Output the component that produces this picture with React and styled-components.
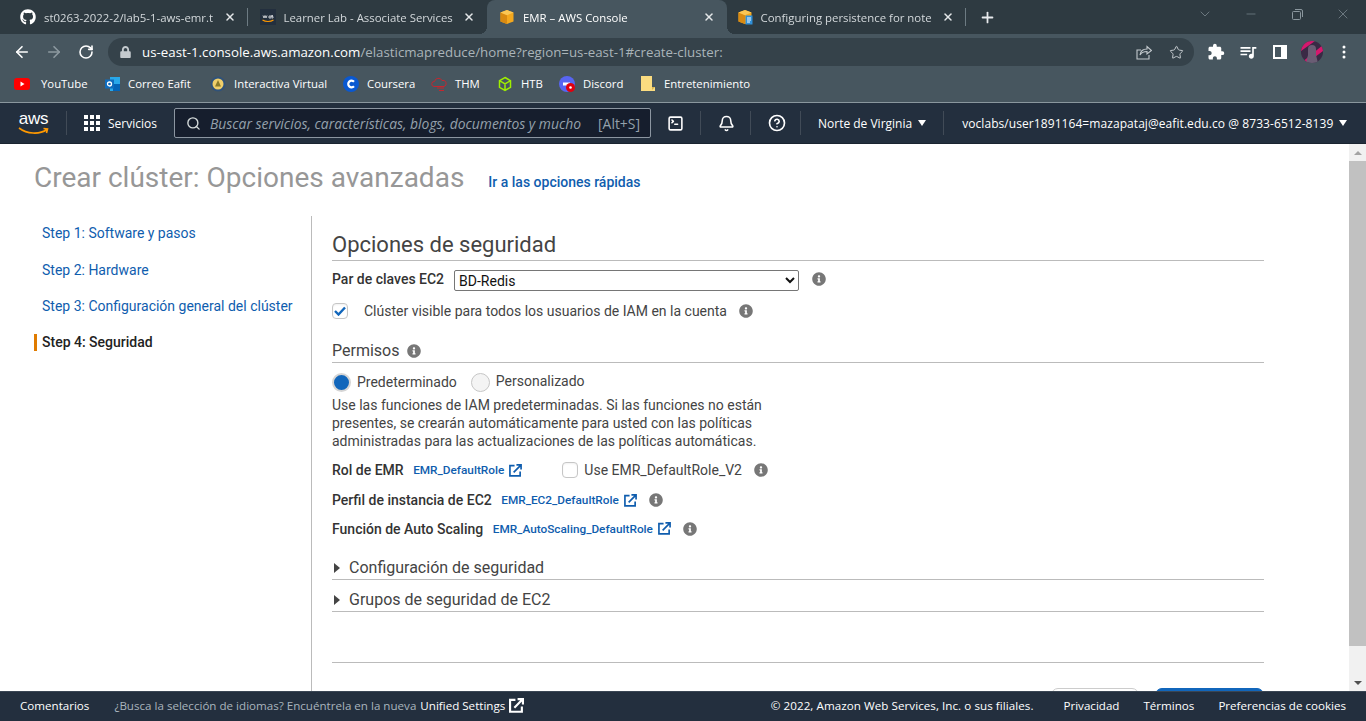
import React from "react";
import styled, { createGlobalStyle } from "styled-components";
import { FaGithub, FaInfoCircle, FaLock } from "react-icons/fa";
import { MdExtension, MdQueueMusic } from "react-icons/md";
import { ArrowLeft, ArrowRight, RotateCw, Star, Bell, CircleHelp, SquareTerminal, Search, X, Plus, ChevronDown, Minus } from "lucide-react";

const GlobalStyle = createGlobalStyle`
  html, body { margin: 0; padding: 0; height: 100%; overflow: hidden; background: #fff; }
  * { box-sizing: border-box; }
`;

const Page = styled.div`
  width: 1366px;
  height: 721px;
  display: flex;
  flex-direction: column;
  overflow: hidden;
  font-family: Roboto, sans-serif;
`;

/* browser chrome */
const TabStrip = styled.div`
  height: 34px;
  flex: none;
  display: flex;
  align-items: center;
  padding-left: 8px;
  background: #2e3a41;
  font-family: "Open Sans", sans-serif;
  font-size: 11.4px;
`;
const Tab = styled.div`
  position: relative;
  width: 239.5px;
  height: 34px;
  flex: none;
  display: flex;
  align-items: center;
  gap: 8px;
  padding: 0 10px 0 ${(p) => p.$left ?? 12}px;
  border-radius: 8px 8px 0 0;
  color: ${(p) => (p.$active ? "#fff" : "#d3d8db")};
  background: ${(p) => (p.$active ? "#47565f" : "transparent")};
  &::after {
    content: "";
    display: ${(p) => (p.$sep ? "block" : "none")};
    position: absolute;
    right: 0;
    top: 8px;
    width: 1px;
    height: 18px;
    background: #6d7b83;
  }
`;
const Flare = styled.span`
  position: absolute;
  bottom: 0;
  width: 8px;
  height: 8px;
  ${(p) =>
    p.$right
      ? "right: -8px; background: radial-gradient(circle at 100% 0, transparent 8px, #47565f 8px);"
      : "left: -8px; background: radial-gradient(circle at 0 0, transparent 8px, #47565f 8px);"}
`;
const TabTitle = styled.span`
  flex: 1;
  min-width: 0;
  white-space: nowrap;
  overflow: hidden;
  -webkit-mask-image: linear-gradient(to right, #000 calc(100% - 6px), transparent);
  mask-image: linear-gradient(to right, #000 calc(100% - 6px), transparent);
`;
const TabClose = styled(X)`
  flex: none;
  width: 12px;
  height: 12px;
  margin: 0 2px 0 -4px;
  color: #e4e7e9;
`;
const NewTab = styled(Plus)`
  width: 17px;
  height: 17px;
  margin-left: 13px;
  color: #e8eaed;
`;
const WindowControls = styled.div`
  margin-left: auto;
  align-self: flex-start;
  display: flex;
  height: 28px;
  align-items: center;
  color: #8b979e;
`;
const WindowButton = styled.div`
  width: 46px;
  display: flex;
  justify-content: center;
`;
const Toolbar = styled.div`
  height: 37px;
  flex: none;
  display: flex;
  align-items: center;
  background: #47565f;
  padding: 0 0 1px 6px;
`;
const ToolButton = styled.div`
  width: ${(p) => p.$w || 32}px;
  height: 28px;
  flex: none;
  display: flex;
  align-items: center;
  justify-content: center;
  color: ${(p) => p.$color || "#fff"};
`;
const Omnibox = styled.div`
  width: 1086px;
  height: 28px;
  margin: 0 6px 0 6px;
  flex: none;
  display: flex;
  align-items: center;
  padding: 0 2px 0 12px;
  border-radius: 14px;
  background: #35424a;
  font-family: "Open Sans", sans-serif;
  font-size: 13.3px;
  color: #aab4b9;
  white-space: nowrap;
`;
const Lock = styled(FaLock)`
  width: 11px;
  height: 12px;
  margin-right: 11px;
  color: #c4cace;
`;
const Host = styled.span`
  color: #fff;
`;
const Grow = styled.div`
  flex: 1;
`;
const Avatar = styled.svg`
  width: 22px;
  height: 22px;
  border-radius: 50%;
`;
const Bookmarks = styled.div`
  height: 32px;
  flex: none;
  display: flex;
  align-items: center;
  padding: 0 0 6px 14px;
  background: #47565f;
  border-bottom: 1px solid #8a979e;
  font-family: "Open Sans", sans-serif;
  font-size: 11.35px;
  color: #fff;
`;
const Bookmark = styled.div`
  width: ${(p) => p.$w}px;
  flex: none;
  display: flex;
  align-items: center;
  gap: ${(p) => p.$gap || 8}px;
  white-space: nowrap;
`;

/* aws console nav */
const Nav = styled.div`
  height: 41px;
  flex: none;
  display: flex;
  align-items: center;
  padding-left: 18px;
  background: #232f3e;
  border-bottom: 1px solid #1a2430;
  color: #fff;
  font-family: "Open Sans", sans-serif;
  font-size: 12px;
  white-space: nowrap;
`;
const Logo = styled.div`
  position: relative;
  width: 31px;
  height: 26px;
  flex: none;
  font-family: "Liberation Sans", sans-serif;
  font-size: 17px;
  line-height: 18px;
  text-align: center;
  letter-spacing: -0.3px;
`;
const Smile = styled.svg`
  position: absolute;
  left: 0;
  bottom: 0;
`;
const NavDivider = styled.div`
  width: 1px;
  height: 24px;
  flex: none;
  margin: 0 ${(p) => p.$after ?? 17}px 0 ${(p) => p.$before ?? 17}px;
  background: #414b57;
`;
const NavLabel = styled.span`
  margin-left: ${(p) => p.$left || 0}px;
  letter-spacing: ${(p) => p.$track || 0}px;
`;
const SearchBox = styled.div`
  width: 477px;
  height: 30px;
  flex: none;
  display: flex;
  align-items: center;
  margin: 0 16px 0 17px;
  padding: 0 10px 0 11px;
  background: #161e2d;
  border: 1px solid #8c96a1;
  border-radius: 2px;
  color: #95a1ac;
  font-size: 13.9px;
`;
const Placeholder = styled.span`
  flex: 1;
  margin-left: 9px;
  font-style: italic;
  white-space: nowrap;
`;
const Caret = styled.span`
  width: 0;
  height: 0;
  margin-left: ${(p) => p.$left ?? 6}px;
  border-left: 4.5px solid transparent;
  border-right: 4.5px solid transparent;
  border-top: 6px solid #fff;
`;

/* page body */
const Body = styled.div`
  flex: 1;
  min-height: 0;
  display: flex;
  overflow: hidden;
`;
const Scroll = styled.div`
  flex: 1;
  min-width: 0;
`;
const ScrollBar = styled.div`
  width: 17px;
  flex: none;
  display: flex;
  flex-direction: column;
  background: #f1f1f1;
`;
const ScrollArrow = styled.div`
  height: 17px;
  display: flex;
  align-items: center;
  justify-content: center;
  &::before {
    content: "";
    border-left: 4px solid transparent;
    border-right: 4px solid transparent;
    ${(p) => (p.$up ? "border-bottom: 4px solid #a3a3a3;" : "border-top: 4px solid #505050;")}
  }
`;
const Thumb = styled.div`
  height: 485px;
  background: #c1c1c1;
`;
const TitleRow = styled.div`
  height: 72px;
  display: flex;
  align-items: center;
  padding: 0 0 6px 34px;
`;
const Title = styled.h1`
  margin: 0;
  font-size: 28px;
  font-weight: 400;
  color: #979797;
`;
const QuickLink = styled.a`
  margin: 9px 0 0 24px;
  font-size: 14px;
  font-weight: 500;
  color: #0f5dae;
`;
const Columns = styled.div`
  display: flex;
`;
const Side = styled.nav`
  width: 312px;
  height: 480px;
  flex: none;
  padding-left: 34px;
  border-right: 1px solid #bbb;
`;
const Step = styled.div`
  height: 34px;
  margin-bottom: 2.6px;
  display: flex;
  align-items: center;
  padding-left: 8px;
  font-size: 14px;
  color: #0f5dae;
`;
const ActiveStep = styled.div`
  height: 17px;
  margin-top: 10.8px;
  display: flex;
  align-items: center;
  padding-left: 5px;
  border-left: 3px solid #e07b00;
  font-size: 14px;
  font-weight: 500;
  color: #222;
`;
const Panel = styled.div`
  width: 932px;
  margin-left: 20px;
  padding-top: 16px;
  color: #444;
  font-size: 14px;
`;
const H2 = styled.h2`
  margin: 0;
  height: 29px;
  font-size: 22px;
  line-height: 26px;
  font-weight: 400;
  border-bottom: 1px solid #bbb;
`;
const Row = styled.div`
  display: flex;
  align-items: center;
  height: ${(p) => p.$h}px;
  margin-top: ${(p) => p.$top || 0}px;
`;
const Label = styled.span`
  font-weight: 500;
  color: #333;
  margin-right: ${(p) => p.$gap ?? 9.5}px;
`;
const Select = styled.select`
  width: 345px;
  height: 21px;
  margin-top: 3px;
  padding: 0;
  font-family: Roboto, sans-serif;
  font-size: 14px;
  color: #111;
  background: #fff;
  border: 1px solid #767676;
  border-radius: 2px;
`;
const Info = styled(FaInfoCircle)`
  flex: none;
  width: 14px;
  height: 14px;
  margin-left: ${(p) => p.$left ?? 12}px;
  color: #777;
`;
const Box = styled.span`
  width: 16px;
  height: 16px;
  flex: none;
  display: flex;
  align-items: center;
  justify-content: center;
  margin: ${(p) => p.$margin || 0};
  background: #fff;
  border: 1px solid #c6c6c6;
  border-radius: 4px;
  box-shadow: inset 0 1px 2px rgba(0, 0, 0, 0.06);
`;
const Sub = styled.div`
  height: 25px;
  margin-top: 13px;
  padding-top: 2px;
  font-size: 16px;
  line-height: 22px;
  display: flex;
  align-items: center;
  border-bottom: 1px solid #bbb;
`;
const Radio = styled.span`
  width: 19px;
  height: 19px;
  flex: none;
  margin-right: ${(p) => p.$gap}px;
  border-radius: 50%;
  background: ${(p) => (p.$on ? "#1166bb" : "#f4f4f4")};
  border: ${(p) => (p.$on ? "2px solid #d5d5d5" : "1px solid #c6c6c6")};
`;
const Option = styled.span`
  margin-right: ${(p) => p.$gap || 0}px;
  position: relative;
  top: ${(p) => p.$up || 0}px;
`;
const Help = styled.p`
  width: 450px;
  margin: -5px 0 0;
  line-height: 18px;
  color: #444;
`;
const RoleLink = styled.a`
  display: inline-flex;
  align-items: center;
  gap: 5px;
  font-size: 11.8px;
  font-weight: 500;
  color: #0f5dae;
`;
const Section = styled.div`
  height: 32px;
  margin-top: ${(p) => p.$top || 0}px;
  display: flex;
  align-items: center;
  padding: 8px 0 0 2px;
  font-size: 16px;
  color: #444;
  border-bottom: 1px solid #bbb;
`;
const Arrow = styled.span`
  width: 0;
  height: 0;
  margin-right: 9px;
  border-top: 5px solid transparent;
  border-bottom: 5px solid transparent;
  border-left: 6px solid #444;
`;
const Rule = styled.div`
  height: 1px;
  margin-top: 50px;
  background: #bbb;
`;
const Actions = styled.div`
  display: flex;
  justify-content: flex-end;
  gap: 16px;
  margin-top: 25px;
`;
const Action = styled.div`
  width: ${(p) => p.$w}px;
  height: 30px;
  border-radius: 7px;
  background: ${(p) => (p.$primary ? "#1166bb" : "#fff")};
  border: 1px solid ${(p) => (p.$primary ? "#1166bb" : "#ccc")};
`;

/* console footer */
const Footer = styled.footer`
  height: 30px;
  flex: none;
  display: flex;
  align-items: center;
  padding: 0 20px 2px;
  background: #232f3e;
  border-top: 1px solid #3a4654;
  font-family: "Open Sans", sans-serif;
  font-size: 11.6px;
  color: #fff;
  white-space: nowrap;
`;
const Muted = styled.span`
  margin-left: 25px;
  color: #a9b4bd;
`;
const FootLink = styled.span`
  display: flex;
  margin-left: ${(p) => p.$left}px;
`;
const Copyright = styled.span`
  letter-spacing: 0.06px;
`;

const ExternalIcon = ({ size = 13, weight = 1.8 }) => (
  <svg width={size} height={size} viewBox="0 0 14 14" fill="none" stroke="currentColor" strokeWidth={weight}>
    <path d="M6 1.800H1v11h11V8" />
    <path d="M5 9l7.500-7.500M8 1h5v5" />
  </svg>
);

const Cube = ({ note }) => (
  <svg width="16" height="16" viewBox="0 0 16 16">
    <path d="M8 1l6.500 2.600v8.800L8 15 1.500 12.400V3.600z" fill="#f4a81e" />
    <path d="M8 6.200L1.500 3.600V12.400L8 15z" fill="#d98a12" />
    <path d="M8 1l6.500 2.600L8 6.200 1.500 3.600z" fill="#fbc654" />
    {note && <path d="M8.500 6.500h7v9h-7z" fill="#2f8fd8" />}
    {note && <path d="M10 9h4M10 11h4M10 13h3" stroke="#fff" strokeWidth="1" />}
  </svg>
);

const AwsFavicon = () => (
  <svg width="16" height="16" viewBox="0 0 16 16">
    <rect width="16" height="16" fill="#232f3e" />
    <path d="M3 6.500l1 2.500 1-2.500 1 2.500 1-2.500M9 7h2v2H9zM13 6.500h-1.500v1h1.500v1.500h-1.500" stroke="#e8eaed" strokeWidth=".8" fill="none" />
    <path d="M2.500 11c3 2 8 2 11 0" stroke="#f90" strokeWidth="1.100" fill="none" />
  </svg>
);

const SidePanelIcon = () => (
  <svg width="14" height="14" viewBox="0 0 14 14">
    <path d="M0 0h14v14H0z" fill="#fff" />
    <path d="M2 2h6v10H2z" fill="#47565f" />
  </svg>
);

const Dots = () => (
  <svg width="4" height="14" viewBox="0 0 4 14" fill="#fff">
    <circle cx="2" cy="2" r="1.500" />
    <circle cx="2" cy="7" r="1.500" />
    <circle cx="2" cy="12" r="1.500" />
  </svg>
);

const ShareIcon = () => (
  <svg width="16" height="16" viewBox="0 0 16 16" fill="none" stroke="#c4cace" strokeWidth="1.100">
    <path d="M5 6H1v9h12v-4" />
    <path d="M4 11c.5-4 3.500-6 7-6V2.500L15.500 6.500 11 10V7.500c-3 0-5.500 1-7 3.500z" />
  </svg>
);

const Grid = () => (
  <svg width="16" height="16" viewBox="0 0 16 16" fill="#fff">
    {[0, 6, 12].flatMap((y) =>
      [0, 6, 12].map((x) => <rect key={`${x}-${y}`} x={x} y={y} width="4" height="4" />)
    )}
  </svg>
);

const bookmarks = [
  { name: "YouTube", w: 91, gap: 11, icon: <svg width="16" height="12" viewBox="0 0 16 12"><rect width="16" height="12" rx="3" fill="#f00" /><path d="M6.500 3.500v5l4-2.500z" fill="#fff" /></svg> },
  { name: "Correo Eafit", w: 105, icon: <svg width="15" height="16" viewBox="0 0 15 16"><path d="M5 1h10v14H5z" fill="#28a8ea" /><path d="M8 8h7v7H8z" fill="#0364b8" /><rect y="3.500" width="9" height="9" fill="#0f6cbd" /><circle cx="4.500" cy="8" r="2" fill="none" stroke="#fff" strokeWidth="1.300" /></svg> },
  { name: "Interactiva Virtual", w: 133, icon: <svg width="16" height="16" viewBox="0 0 16 16"><circle cx="8" cy="8" r="7.500" fill="#30527a" /><circle cx="8" cy="8" r="5.500" fill="#f0cf6a" /><path d="M8 4l3 6.500H5z" fill="#8a7a2a" /></svg> },
  { name: "Coursera", w: 88, icon: <svg width="16" height="16" viewBox="0 0 16 16"><circle cx="8" cy="8" r="8" fill="#0a58d0" /><path d="M11 5.800a3.300 3.300 0 1 0 0 4.400" fill="none" stroke="#fff" strokeWidth="2.200" /></svg> },
  { name: "THM", w: 66, icon: <svg width="16" height="16" viewBox="0 0 16 16" fill="none" stroke="#c3272f" strokeWidth="1"><path d="M3 10.500a2.500 2.500 0 0 1 .5-5A4 4 0 0 1 11 4.500a3 3 0 0 1 2 6H3z" /><path d="M6 12h7M8 14.500h5" /></svg> },
  { name: "HTB", w: 62, icon: <svg width="16" height="16" viewBox="0 0 16 16" fill="none" stroke="#9fef00" strokeWidth="1.500"><path d="M8 1.500l5.500 3.200v6.600L8 14.500l-5.500-3.200V4.700zM2.500 4.700L8 8l5.500-3.300M8 8v6.500" /></svg> },
  { name: "Discord", w: 82, icon: <svg width="16" height="16" viewBox="0 0 16 16"><circle cx="8" cy="8" r="8" fill="#5865f2" /><path d="M4 6.500h7v3H4z" fill="#fff" /><circle cx="11.500" cy="11.500" r="4.500" fill="#e0000f" /><circle cx="11.500" cy="11.500" r="1.300" fill="#fff" /></svg> },
  { name: "Entretenimiento", w: 120, gap: 9, icon: <svg width="14" height="15" viewBox="0 0 14 15"><path d="M0 0h11v11l3 0v4H0z" fill="#fbdc80" /><path d="M11 11h3l-3 3z" fill="#d8b44e" /></svg> },
];

const App = () => {
  return (
    <Page>
      <GlobalStyle />
      <TabStrip>
        <Tab $sep>
          <FaGithub size={16} color="#fff" />
          <TabTitle>st0263-2022-2/lab5-1-aws-emr.t</TabTitle>
          <TabClose strokeWidth={3} />
        </Tab>
        <Tab>
          <AwsFavicon />
          <TabTitle>Learner Lab - Associate Services</TabTitle>
          <TabClose strokeWidth={3} />
        </Tab>
        <Tab $active>
          <Flare />
          <Cube />
          <TabTitle>EMR – AWS Console</TabTitle>
          <TabClose strokeWidth={3} />
          <Flare $right />
        </Tab>
        <Tab $sep $left={10}>
          <Cube note />
          <TabTitle>Configuring persistence for note</TabTitle>
          <TabClose strokeWidth={3} />
        </Tab>
        <NewTab strokeWidth={2.5} />
        <WindowControls>
          <WindowButton><ChevronDown size={16} strokeWidth={1} /></WindowButton>
          <WindowButton><Minus size={14} strokeWidth={1} /></WindowButton>
          <WindowButton>
            <svg width="11" height="11" viewBox="0 0 11 11" fill="none" stroke="currentColor"><rect x=".5" y="2.500" width="8" height="8" rx="1" /><path d="M3 .5h6a1.500 1.500 0 0 1 1.500 1.500v6" /></svg>
          </WindowButton>
          <WindowButton><X size={16} strokeWidth={1} /></WindowButton>
        </WindowControls>
      </TabStrip>

      <Toolbar>
        <ToolButton><ArrowLeft size={18} strokeWidth={2.2} /></ToolButton>
        <ToolButton $color="#8d99a0"><ArrowRight size={18} strokeWidth={2.2} /></ToolButton>
        <ToolButton><RotateCw size={16} strokeWidth={2.4} /></ToolButton>
        <Omnibox>
          <Lock />
          <Host>us-east-1.console.aws.amazon.com</Host>/elasticmapreduce/home?region=us-east-1#create-cluster:
          <Grow />
          <ToolButton><ShareIcon /></ToolButton>
          <ToolButton $color="#c4cace"><Star size={15} strokeWidth={1.6} /></ToolButton>
        </Omnibox>
        <ToolButton><MdExtension size={18} /></ToolButton>
        <ToolButton><MdQueueMusic size={20} /></ToolButton>
        <ToolButton><SidePanelIcon /></ToolButton>
        <ToolButton>
          <Avatar viewBox="0 0 22 22">
            <rect width="22" height="22" fill="#3a2a45" />
            <path d="M0 22L22 4v6L6 22zM4 0h10L0 10V4z" fill="#d6186e" />
            <path d="M7 8a4 4 0 0 1 8 0v6l2 8H5l2-8z" fill="#6a5d74" />
          </Avatar>
        </ToolButton>
        <ToolButton><Dots /></ToolButton>
      </Toolbar>

      <Bookmarks>
        {bookmarks.map((b) => (
          <Bookmark key={b.name} $w={b.w} $gap={b.gap}>
            {b.icon}
            {b.name}
          </Bookmark>
        ))}
      </Bookmarks>

      <Nav>
        <Logo>
          aws
          <Smile width="31" height="9" viewBox="0 0 31 9" fill="none" stroke="#f90" strokeWidth="1.600">
            <path d="M1 1c8 6 20 7 28 1.500M25.500 1.500l4 .5-1 4" />
          </Smile>
        </Logo>
        <NavDivider />
        <Grid />
        <NavLabel $left={8}>Servicios</NavLabel>
        <SearchBox>
          <Search size={15} color="#d5dbdb" strokeWidth={2.2} />
          <Placeholder>Buscar servicios, características, blogs, documentos y mucho</Placeholder>
          <span>[Alt+S]</span>
        </SearchBox>
        <SquareTerminal size={17} strokeWidth={2.2} />
        <NavDivider $before={16} $after={17} />
        <Bell size={17} strokeWidth={2.2} />
        <NavDivider $before={15} $after={17} />
        <CircleHelp size={18} strokeWidth={2.2} />
        <NavDivider $before={14} $after={17} />
        <NavLabel>Norte de Virginia</NavLabel>
        <Caret />
        <NavDivider $before={17} $after={18} />
        <NavLabel $track={0.07}>voclabs/user1891164=mazapataj@eafit.edu.co @ 8733-6512-8139</NavLabel>
        <Caret $left={5.5} />
      </Nav>

      <Body>
        <Scroll>
          <TitleRow>
            <Title>Crear clúster: Opciones avanzadas</Title>
            <QuickLink>Ir a las opciones rápidas</QuickLink>
          </TitleRow>
          <Columns>
            <Side>
              <Step>Step 1: Software y pasos</Step>
              <Step>Step 2: Hardware</Step>
              <Step>Step 3: Configuración general del clúster</Step>
              <ActiveStep>Step 4: Seguridad</ActiveStep>
            </Side>
            <Panel>
              <H2>Opciones de seguridad</H2>
              <Row $h={36}>
                <Label $gap={10}>Par de claves EC2</Label>
                <Select defaultValue="BD-Redis">
                  <option>BD-Redis</option>
                </Select>
                <Info $left={13} />
              </Row>
              <Row $h={28}>
                <Box $margin="0 16px 0 0">
                  <svg width="12" height="10" viewBox="0 0 12 10" fill="none" stroke="#1166bb" strokeWidth="2.400"><path d="M1 5l3.500 3.500L11 1.500" /></svg>
                </Box>
                Clúster visible para todos los usuarios de IAM en la cuenta
                <Info />
              </Row>
              <Sub>
                Permisos
                <Info $left={8} />
              </Sub>
              <Row $h={38}>
                <Radio $on $gap={6} />
                <Option $gap={14}>Predeterminado</Option>
                <Radio $gap={6} />
                <Option $up={-1}>Personalizado</Option>
              </Row>
              <Help>
                Use las funciones de IAM predeterminadas. Si las funciones no están presentes, se crearán automáticamente para usted con las políticas administradas para las actualizaciones de las políticas automáticas.
              </Help>
              <Row $h={30} $top={5}>
                <Label>Rol de EMR</Label>
                <RoleLink>EMR_DefaultRole <ExternalIcon /></RoleLink>
                <Box $margin="0 6px 0 40px" />
                Use EMR_DefaultRole_V2
                <Info />
              </Row>
              <Row $h={30}>
                <Label>Perfil de instancia de EC2</Label>
                <RoleLink>EMR_EC2_DefaultRole <ExternalIcon /></RoleLink>
                <Info />
              </Row>
              <Row $h={27}>
                <Label>Función de Auto Scaling</Label>
                <RoleLink>EMR_AutoScaling_DefaultRole <ExternalIcon /></RoleLink>
                <Info />
              </Row>
              <Section $top={6}>
                <Arrow />
                Configuración de seguridad
              </Section>
              <Section>
                <Arrow />
                Grupos de seguridad de EC2
              </Section>
              <Rule />
              <Actions>
                <Action $w={88} />
                <Action $w={109} $primary />
              </Actions>
            </Panel>
          </Columns>
        </Scroll>
        <ScrollBar>
          <ScrollArrow $up />
          <Thumb />
          <Grow />
          <ScrollArrow />
        </ScrollBar>
      </Body>

      <Footer>
        <span>Comentarios</span>
        <Muted>¿Busca la selección de idiomas? Encuéntrela en la nueva</Muted>
        <FootLink $left={4}>Unified Settings</FootLink>
        <FootLink $left={4}><ExternalIcon size={15} weight={2} /></FootLink>
        <Grow />
        <Copyright>© 2022, Amazon Web Services, Inc. o sus filiales.</Copyright>
        <FootLink $left={30}>Privacidad</FootLink>
        <FootLink $left={24}>Términos</FootLink>
        <FootLink $left={24}>Preferencias de cookies</FootLink>
      </Footer>
    </Page>
  );
};

export default App;
